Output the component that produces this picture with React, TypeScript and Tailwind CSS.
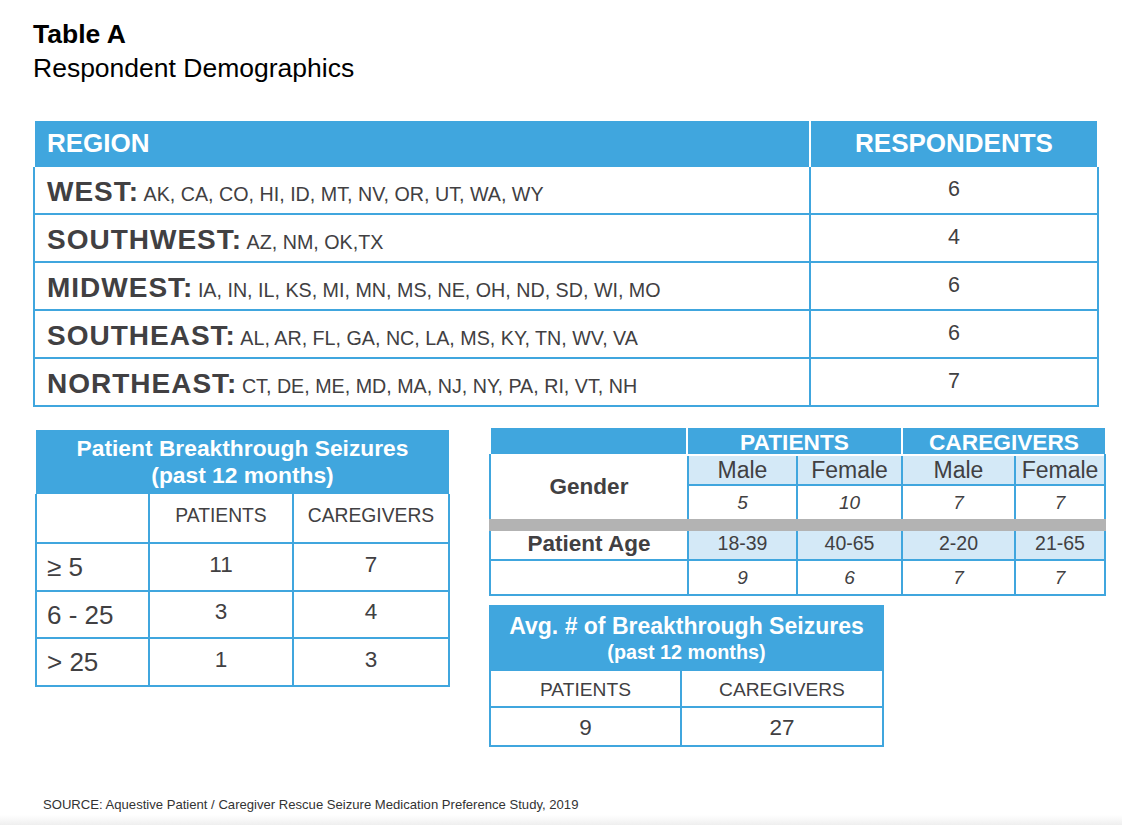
import React from "react";

const regions = [
  { name: "WEST:", states: "AK, CA, CO, HI, ID, MT, NV, OR, UT, WA, WY", count: 6 },
  { name: "SOUTHWEST:", states: "AZ, NM, OK,TX", count: 4 },
  { name: "MIDWEST:", states: "IA, IN, IL, KS, MI, MN, MS, NE, OH, ND, SD, WI, MO", count: 6 },
  { name: "SOUTHEAST:", states: "AL, AR, FL, GA, NC, LA, MS, KY, TN, WV, VA", count: 6 },
  { name: "NORTHEAST:", states: "CT, DE, ME, MD, MA, NJ, NY, PA, RI, VT, NH", count: 7 },
];

const breakthrough = [
  { label: "≥ 5", patients: 11, caregivers: 7, h: "h-[48px]", pt: "pt-[10px]" },
  { label: "6 - 25", patients: 3, caregivers: 4, h: "h-[47px]", pt: "pt-[9px]" },
  { label: "> 25", patients: 1, caregivers: 3, h: "h-[48px]", pt: "pt-[10px]" },
];

function RegionTable() {
  return (
    <div className="mt-[38px] w-[1066px]">
      <div className="mx-[2px] flex h-[46px] bg-[#40a6de] text-[26px] font-bold leading-none text-white">
        <div className="w-[774px] pl-[12px] pt-[9px]">REGION</div>
        <div className="flex-1 border-l-2 border-white pt-[9px] text-center">RESPONDENTS</div>
      </div>
      <div className="border-x-2 border-[#40a6de]">
        {regions.map((r) => (
          <div key={r.name} className="flex h-[48px] border-b-2 border-[#40a6de] text-[#414042]">
            <div className="w-[774px] pl-[12px] pt-[11px] leading-none">
              <span className="text-[28px] font-bold tracking-[1px]">{r.name}</span>{" "}
              <span className="text-[19.7px]">{r.states}</span>
            </div>
            <div className="flex-1 border-l-2 border-[#40a6de] pt-[12px] text-center text-[21.5px] leading-none">
              {r.count}
            </div>
          </div>
        ))}
      </div>
    </div>
  );
}

function BreakthroughTable() {
  return (
    <div className="ml-[2px] mt-[2px] w-[415px]">
      <div className="mx-[1px] h-[64px] bg-[#40a6de] pt-[5px] text-center text-[22.8px] font-bold leading-[27px] text-white">
        <div>Patient Breakthrough Seizures</div>
        <div>(past 12 months)</div>
      </div>
      <div className="grid grid-cols-[111px_144px_156px] border-x-2 border-[#40a6de] text-[#414042]">
        <div className="h-[50px] border-b-2 border-[#40a6de]" />
        <div className="h-[50px] border-b-2 border-l-2 border-[#40a6de] pt-[12px] text-center text-[19.3px] leading-none">PATIENTS</div>
        <div className="h-[50px] border-b-2 border-l-2 border-[#40a6de] pt-[12px] text-center text-[19.3px] leading-none">CAREGIVERS</div>
        {breakthrough.map((r) => (
          <React.Fragment key={r.label}>
            <div className={`${r.h} border-b-2 border-[#40a6de] pl-[10px] pt-[10px] text-[26px] leading-none`}>{r.label}</div>
            <div className={`${r.h} border-b-2 border-l-2 border-[#40a6de] ${r.pt} text-center text-[22.5px] leading-none`}>{r.patients}</div>
            <div className={`${r.h} border-b-2 border-l-2 border-[#40a6de] ${r.pt} text-center text-[22.5px] leading-none`}>{r.caregivers}</div>
          </React.Fragment>
        ))}
      </div>
    </div>
  );
}

function DemoTable() {
  const head = "flex h-[30px] items-center justify-center border-b-2 border-l-2 border-[#40a6de] bg-[#d4e9f7] text-[23px]";
  const val = "flex h-[33px] items-center justify-center border-l-2 border-[#40a6de] text-[19px] italic";
  const age = "flex h-[30px] items-center justify-center border-b-2 border-l-2 border-[#40a6de] bg-[#d4e9f7] pb-[2px] text-[19.5px]";
  return (
    <div className="w-[617px]">
      <div className="flex h-[26px] pl-[2px] pr-[1px] text-[22.7px] font-bold leading-none text-white">
        <div className="w-[195px] bg-[#40a6de]" />
        <div className="w-[215px] border-l-2 border-white bg-[#40a6de] pt-[3px] text-center">PATIENTS</div>
        <div className="flex-1 border-l-2 border-white bg-[#40a6de] pt-[3px] text-center">CAREGIVERS</div>
      </div>
      <div className="grid grid-cols-[196px_109px_105px_113px_90px] border-x-2 border-b-2 border-[#40a6de] pt-[2px] leading-none text-[#414042]">
        <div className="row-span-2 flex items-center justify-center text-[22.5px] font-bold">Gender</div>
        <div className={head}>Male</div>
        <div className={head}>Female</div>
        <div className={head}>Male</div>
        <div className={head}>Female</div>
        <div className={val}>5</div>
        <div className={val}>10</div>
        <div className={val}>7</div>
        <div className={val}>7</div>
        <div className="col-span-5 -mx-[2px] h-[12px] bg-[#b3b3b3]" />
        <div className="flex h-[30px] items-center justify-center border-b-2 border-[#40a6de] pb-[2px] text-[22.5px] font-bold">Patient Age</div>
        <div className={age}>18-39</div>
        <div className={age}>40-65</div>
        <div className={age}>2-20</div>
        <div className={age}>21-65</div>
        <div className="h-[33px]" />
        <div className={val}>9</div>
        <div className={val}>6</div>
        <div className={val}>7</div>
        <div className={val}>7</div>
      </div>
    </div>
  );
}

function AvgTable() {
  return (
    <div className="mt-[9px] w-[395px]">
      <div className="h-[66px] bg-[#40a6de] pt-[10px] text-center font-bold leading-none text-white">
        <div className="text-[23px]">Avg. # of Breakthrough Seizures</div>
        <div className="mt-[5px] text-[19.8px]">(past 12 months)</div>
      </div>
      <div className="grid grid-cols-[189px_202px] border-x-2 border-b-2 border-[#40a6de] text-center leading-none text-[#414042]">
        <div className="flex h-[37px] items-center justify-center border-b-2 border-[#40a6de] pt-[3px] text-[19.2px]">PATIENTS</div>
        <div className="flex h-[37px] items-center justify-center border-b-2 border-l-2 border-[#40a6de] pt-[3px] text-[19.2px]">CAREGIVERS</div>
        <div className="flex h-[37px] items-center justify-center pt-[4px] text-[22.5px]">9</div>
        <div className="flex h-[37px] items-center justify-center border-l-2 border-[#40a6de] pt-[4px] text-[22.5px]">27</div>
      </div>
    </div>
  );
}

export default function App() {
  return (
    <div className="flex h-[825px] w-[1122px] flex-col bg-white font-['Liberation_Sans',Arial,sans-serif]">
      <div className="flex-1 pl-[33px] pt-[20px]">
        <div className="text-[26.5px] leading-[29px] text-black">
          <div className="font-bold">Table A</div>
          <div className="mt-[5px]">Respondent Demographics</div>
        </div>

        <RegionTable />

        <div className="mt-[21px] flex items-start">
          <BreakthroughTable />
          <div className="ml-[39px]">
            <DemoTable />
            <AvgTable />
          </div>
        </div>

        <div className="mt-[48px] pl-[10px] text-[13.1px] text-[#333333]">
          SOURCE: Aquestive Patient / Caregiver Rescue Seizure Medication Preference Study, 2019
        </div>
      </div>
      <div className="h-[10px] bg-gradient-to-b from-white to-[#efefef]" />
    </div>
  );
}
